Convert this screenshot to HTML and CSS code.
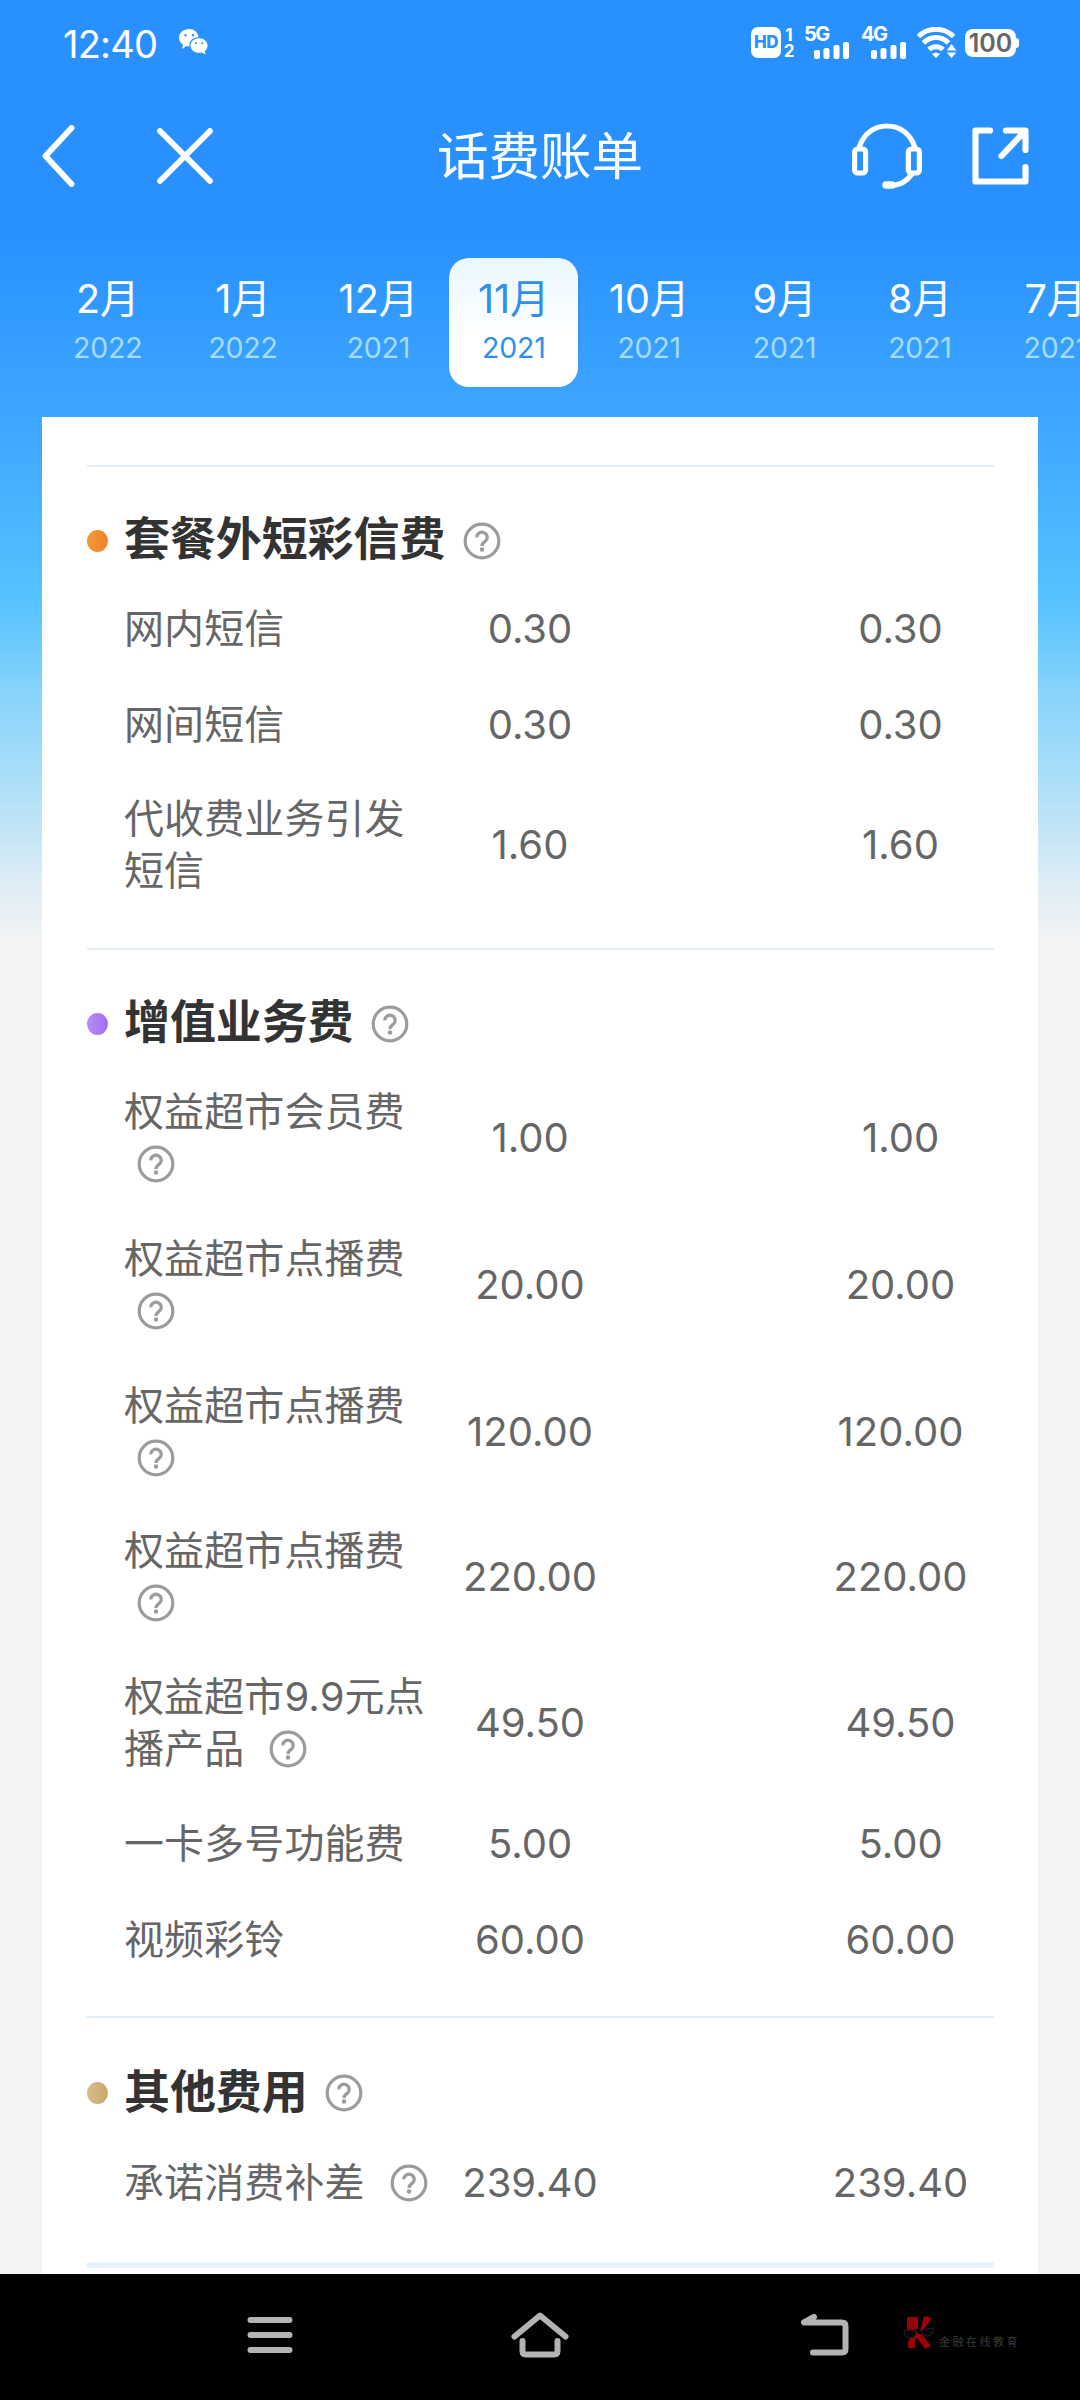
FILE: index.html
```html
<!DOCTYPE html>
<html lang="zh-CN">
<head>
<meta charset="utf-8">
<title>话费账单</title>
<link rel="stylesheet" href="styles.css">
</head>
<body>
<svg class="defs" width="0" height="0" aria-hidden="true">
  <symbol id="help" viewBox="0 0 38 38">
    <circle cx="19" cy="19" r="16.800" fill="none" stroke="#9c9c9c" stroke-width="3.200"/>
    <path d="M13.800 15.400a5.200 5 0 1 1 8.400 3.800c-2 1.500-3.200 2.300-3.200 4.800" fill="none" stroke="#9c9c9c" stroke-width="3.200"/>
    <circle cx="19" cy="27.500" r="2.200" fill="#9c9c9c"/>
  </symbol>
</svg>
<div class="screen">
  <header class="status">
    <span class="clock">12:40</span>
    <svg class="wechat" width="30" height="26" viewBox="0 0 30 26">
      <path fill="#fff" fill-rule="evenodd" d="M10 0C4.500 0 0 3.900 0 8.800c0 3 1.500 5.300 4 6.900L3.200 20l4.300-2.900c1 .2 2 .3 3 .3C9.600 12 14 8 19.500 8.200 19 3.400 15 0 10 0ZM6.500 5a1.200 1.200 0 1 1 0 2.400 1.200 1.200 0 0 1 0-2.400Zm7.500 0a1.200 1.200 0 1 1 0 2.400A1.200 1.200 0 0 1 14 5Z"/>
      <path fill="#fff" fill-rule="evenodd" d="M20 9.200c-4.800 0-8.500 3.200-8.500 7.300s3.700 7.300 8.500 7.300c1 0 2-.1 3-.4l3.500 2.100-.7-3.400c1.700-1.300 2.700-3.300 2.700-5.600 0-4.100-3.700-7.300-8.500-7.300Zm-3 3.800a1 1 0 1 1 0 2 1 1 0 0 1 0-2Zm6.200 0a1 1 0 1 1 0 2 1 1 0 0 1 0-2Z"/>
    </svg>
    <div class="indicators">
      <span class="hd">HD</span>
      <span class="sims"><i>1</i><i>2</i></span>
      <span class="signal net5"><b>5G</b><svg width="36" height="17" viewBox="0 0 36 17" fill="#fff"><rect x="0" y="8" width="6" height="9" rx="2"/><rect x="9.500" y="6" width="6" height="11" rx="2"/><rect x="19.500" y="3" width="6" height="14" rx="2"/><rect x="29" y="0" width="6" height="17" rx="2"/></svg></span>
      <span class="signal net4"><b>4G</b><svg width="36" height="17" viewBox="0 0 36 17" fill="#fff"><rect x="0" y="8" width="6" height="9" rx="2"/><rect x="9.500" y="6" width="6" height="11" rx="2"/><rect x="19.500" y="3" width="6" height="14" rx="2"/><rect x="29" y="0" width="6" height="17" rx="2"/></svg></span>
      <svg class="wifi" width="40" height="32" viewBox="0 0 40 32">
        <g fill="none" stroke="#fff" stroke-width="5"><path d="M1.500 9.500a25 25 0 0 1 35 0"/><path d="M6.500 16a17 17 0 0 1 25 0"/><path d="M12 22.500a10 10 0 0 1 14 0"/></g>
        <path d="M15 27q4-3 8 0L19 31Z" fill="#fff"/>
        <path d="m34.500 17 4.800 6.500h-9.600Zm0 14-4.800-5.500h9.600Z" fill="#fff"/>
      </svg>
      <span class="battery">100</span>
    </div>
  </header>

  <nav class="titlebar">
    <svg class="back" width="34" height="62" viewBox="0 0 34 62" fill="none" stroke="#fff" stroke-width="5.800" stroke-linecap="round" stroke-linejoin="round"><path d="M29.500 3 3.500 31l26 28"/></svg>
    <svg class="close" width="56" height="56" viewBox="0 0 56 56" fill="none" stroke="#fff" stroke-width="5.800" stroke-linecap="round"><path d="m3 3 50 50M53 3 3 53"/></svg>
    <h1>话费账单</h1>
    <svg class="service" width="70" height="66" viewBox="0 0 70 66" fill="none" stroke="#fff" stroke-width="5.200" stroke-linecap="round" stroke-linejoin="round">
      <path d="M7 25C11 11 22 3 35 3s24 8 28 22"/><rect x="2.600" y="26" width="11" height="24" rx="3"/><rect x="56.400" y="26" width="11" height="24" rx="3"/><path d="M60 51c-5 7-12 11-20 11.500"/><path d="M34 62h6" stroke-width="7.500"/>
    </svg>
    <svg class="share" width="58" height="58" viewBox="0 0 58 58" fill="none" stroke="#fff" stroke-width="6.200" stroke-linecap="round" stroke-linejoin="round"><path d="M18 3.500H3.500v51h50V40M34 3.500h19.500V23M53 4 29.500 29"/></svg>
  </nav>

  <div class="months">
    <div class="month"><b>2月</b><span>2022</span></div>
    <div class="month"><b>1月</b><span>2022</span></div>
    <div class="month"><b>12月</b><span>2021</span></div>
    <div class="month active"><b>11月</b><span>2021</span></div>
    <div class="month"><b>10月</b><span>2021</span></div>
    <div class="month"><b>9月</b><span>2021</span></div>
    <div class="month"><b>8月</b><span>2021</span></div>
    <div class="month"><b>7月</b><span>2021</span></div>
  </div>

  <main class="bill">
    <section class="group sms">
      <h2><i class="dot orange"></i>套餐外短彩信费<svg class="help"><use href="#help"/></svg></h2>
      <div class="row"><div class="label">网内短信</div><div>0.30</div><div class="total">0.30</div></div>
      <div class="row"><div class="label">网间短信</div><div>0.30</div><div class="total">0.30</div></div>
      <div class="row double"><div class="label">代收费业务引发<br>短信</div><div>1.60</div><div class="total">1.60</div></div>
    </section>
    <section class="group value-added">
      <h2><i class="dot purple"></i>增值业务费<svg class="help"><use href="#help"/></svg></h2>
      <div class="row tall"><div class="label">权益超市会员费<br><svg class="help"><use href="#help"/></svg></div><div>1.00</div><div class="total">1.00</div></div>
      <div class="row tall"><div class="label">权益超市点播费<br><svg class="help"><use href="#help"/></svg></div><div>20.00</div><div class="total">20.00</div></div>
      <div class="row tall"><div class="label">权益超市点播费<br><svg class="help"><use href="#help"/></svg></div><div>120.00</div><div class="total">120.00</div></div>
      <div class="row double"><div class="label">权益超市点播费<br><svg class="help"><use href="#help"/></svg></div><div>220.00</div><div class="total">220.00</div></div>
      <div class="row tall"><div class="label">权益超市9.9元点<br>播产品<svg class="help after"><use href="#help"/></svg></div><div>49.50</div><div class="total">49.50</div></div>
      <div class="row"><div class="label">一卡多号功能费</div><div>5.00</div><div class="total">5.00</div></div>
      <div class="row"><div class="label">视频彩铃</div><div>60.00</div><div class="total">60.00</div></div>
    </section>
    <section class="group other">
      <h2><i class="dot gold"></i>其他费用<svg class="help"><use href="#help"/></svg></h2>
      <div class="row"><div class="label">承诺消费补差<svg class="help after"><use href="#help"/></svg></div><div>239.40</div><div class="total">239.40</div></div>
    </section>
    <div class="divider"></div>
  </main>

  <footer class="navbar">
    <svg class="menu" width="46" height="42" viewBox="0 0 46 42" stroke="#b3b3b3" stroke-width="6" stroke-linecap="round"><path d="M3.500 6h39M3.500 21h39M3.500 36h39"/></svg>
    <svg class="home" width="58" height="46" viewBox="0 0 58 46" fill="none" stroke="#b3b3b3" stroke-width="6" stroke-linecap="round" stroke-linejoin="round"><path d="M3.500 24.500 29 3.500l25.500 21M11.500 29v10q0 3.500 3.500 3.500h28q3.500 0 3.500-3.500V29"/></svg>
    <svg class="return" width="50" height="44" viewBox="0 0 50 44" fill="none" stroke="#b3b3b3" stroke-width="6" stroke-linecap="round" stroke-linejoin="round"><path d="M14 4 4 9.500h38q3.500 0 3.500 3.500v23q0 3.500-3.500 3.500H13"/></svg>
    <div class="brand">
      <svg width="32" height="36" viewBox="0 0 32 36">
        <path fill="#98000a" d="M4 2h11v12h-2L15 19l4 0 9 12-6 3-8-11-2 2v8H5v-6l2-4H4ZM21 1l8 2-9 13h-3Z"/>
        <path d="M1 15h12q1 8-6 8-6 0-6-8Zm17 0 12-2q1 8-5 8t-7-6Z" fill="#080808" stroke="#202020"/>
      </svg>
      <span>金融在线教育</span>
    </div>
  </footer>
</div>
</body>
</html>
```

FILE: styles.css
```css
* { box-sizing: border-box; }
body, h1, h2 { margin: 0; }
body { font-family: Inter, "Noto Sans CJK SC", sans-serif; }
i { font-style: normal; }
svg { display: block; flex: none; }
.defs { position: absolute; }

.screen {
  width: 1080px;
  height: 2400px;
  overflow: hidden;
  display: flex;
  flex-direction: column;
  background: linear-gradient(180deg, #2891ff 0, #2891ff 230px, #40a8ff 430px, #54c2ff 595px, #86d3fb 690px, #b4e1f8 800px, #d9ebf6 870px, #f4f4f4 945px);
}

/* status bar */
.status { height: 88px; flex: none; display: flex; align-items: center; padding: 0 59px 0 63px; color: #fff; }
.clock { width: 116px; font-size: 38px; font-weight: 400; letter-spacing: -0.8px; }
.wechat { margin-top: -4px; }
.indicators { margin-left: auto; display: flex; align-items: center; height: 32px; margin-top: -3px; }
.hd { width: 30px; height: 31px; border-radius: 7px; background: #fff; color: #2891ff; font-size: 17px; font-weight: 800; line-height: 31px; text-align: center; letter-spacing: -0.5px; }
.sims { width: 14px; margin-left: 1px; display: flex; flex-direction: column; align-items: center; font-size: 17px; font-weight: 700; line-height: 16px; }
.signal { width: 46px; height: 32px; display: flex; flex-direction: column; }
.signal b { font-size: 20px; line-height: 15px; letter-spacing: -1.5px; }
.signal svg { margin: 0 0 0 10px; }
.net5 { margin-left: 8px; }
.net4 { margin-left: 11px; }
.wifi { margin-left: 10px; }
.battery { width: 51px; height: 28px; margin-left: 8px; margin-right: 5px; border-radius: 8px; background: #fff; color: #666; font-size: 25px; font-weight: 600; line-height: 28px; text-align: center; position: relative; }
.battery::after { content: ""; position: absolute; left: 50px; top: 9px; width: 4px; height: 10px; border-radius: 0 3px 3px 0; background: #fff; }

/* title bar */
.titlebar { height: 136px; flex: none; display: flex; align-items: center; padding: 0 50px 0 42px; color: #fff; }
.close { margin-left: 81px; }
.titlebar h1 { flex: 1; margin-left: 224px; font-size: 51.5px; font-weight: 400; line-height: 70px; }
.share { margin-left: 50px; }

/* month tabs */
.months { height: 193px; flex: none; display: flex; padding: 34px 0 0 40px; overflow: hidden; }
.month { flex: none; width: 129px; height: 129px; margin: 0 3.2px; display: flex; flex-direction: column; align-items: center; border-radius: 20px; color: #fff; }
.month b { font-size: 39.5px; font-weight: 400; line-height: 50px; margin-top: 16px; }
.month span { font-size: 28.5px; line-height: 40px; margin-top: 4px; letter-spacing: -0.2px; color: #a5dcff; }
.month.active, .month.active span { color: #2f8fe8; }
.month.active { background: linear-gradient(#e9f7ff, #fff 60%); }

/* bill card */
.bill { width: 996px; height: 1857px; flex: none; margin: 0 auto; padding: 48px 44px 0 45px; background: #fff; color: #666; }
.group { border-top: 2px solid #e0ecf6; padding-left: 37px; }
.sms { height: 483px; }
.value-added { height: 1068px; }
.other { height: 246px; }
.group h2 { height: 114px; display: flex; align-items: center; padding-top: 28px; margin-left: -37px; color: #333; font-size: 46px; line-height: 60px; letter-spacing: -0.1px; }
.other h2 { height: 117px; }
.dot { width: 21px; height: 22px; margin: 5px 16px 0 0; border-radius: 50%; }
.orange { background: linear-gradient(90deg, #f59a35, #ee822a); }
.purple { background: linear-gradient(90deg, #b98af8, #a26df2); }
.gold { background: linear-gradient(90deg, #d9bd8b, #c6a86d); }
.help { width: 38px; height: 38px; }
.group h2 .help { margin: 5px 0 0 18px; }
.value-added h2 .help, .other h2 .help { margin-left: 17px; }
.row { height: 96px; display: grid; grid-template-columns: 306px 200px 1fr 187px; align-items: center; font-size: 40px; line-height: 52px; text-align: center; }
.double { height: 144px; }
.tall { height: 147px; }
.label { text-align: left; white-space: nowrap; letter-spacing: 0.1px; }
.label .help { display: inline-block; vertical-align: -5px; margin-left: 13px; }
.label .after { margin-left: 25px; }
.total { grid-column: 4; }
.divider { height: 6px; background: #e8f2fc; }

/* system navigation */
.navbar { height: 126px; flex: none; display: flex; align-items: center; padding: 0 0 4px 247px; background: #000; }
.home { margin-left: 218px; }
.return { margin-left: 231px; }
.brand { display: flex; align-items: center; margin: -4px 0 0 53px; }
.brand span { margin: 17px 0 0 4px; color: #3b3b3b; font-size: 11px; line-height: 14px; letter-spacing: 2.5px; }
```
